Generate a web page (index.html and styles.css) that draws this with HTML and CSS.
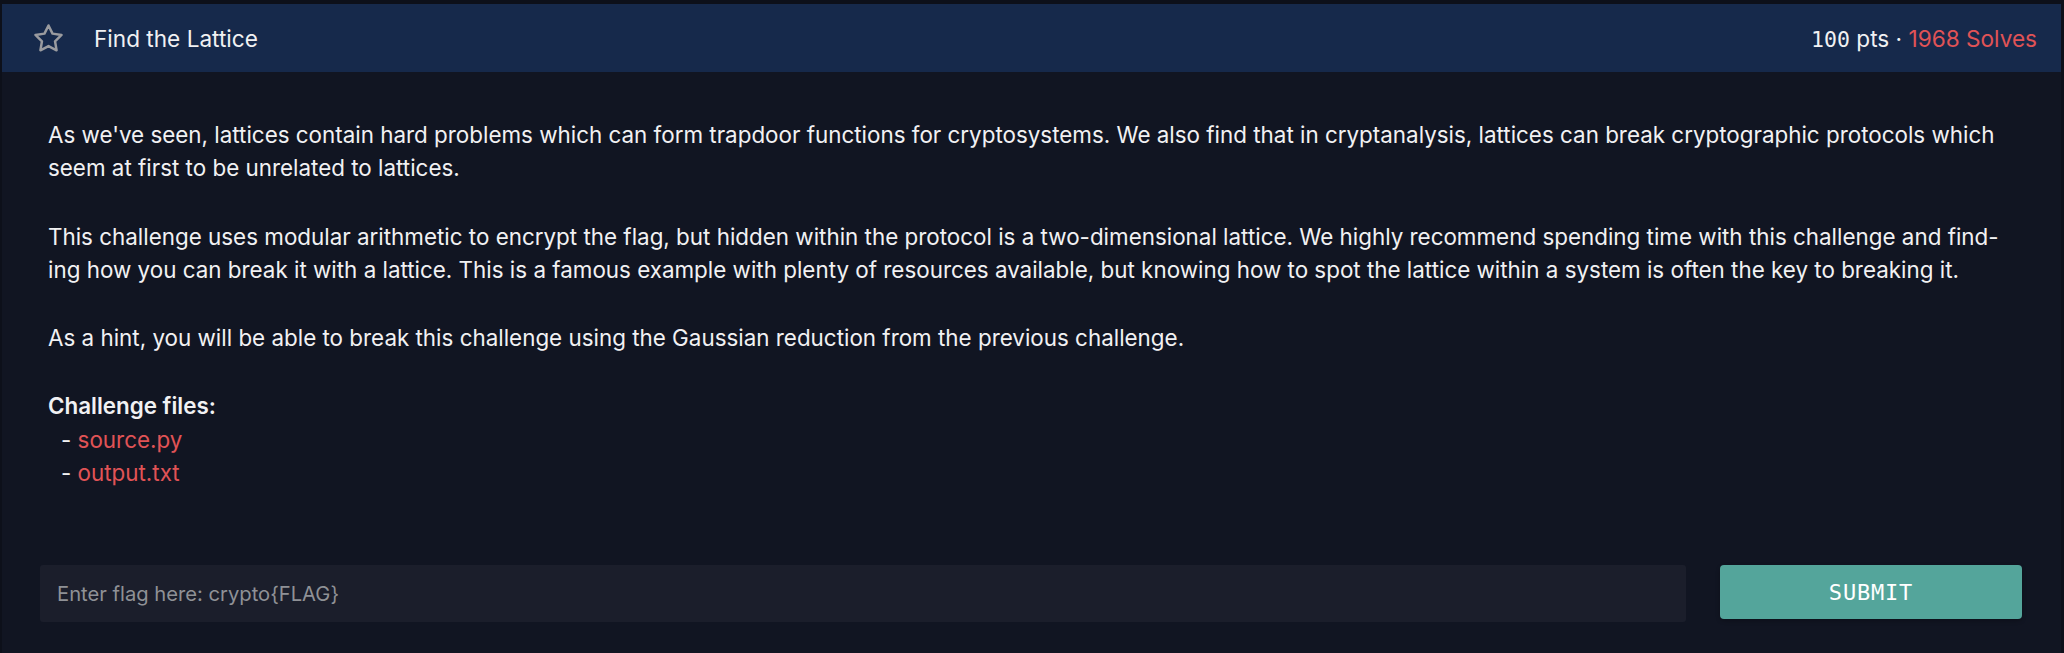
FILE: index.html
```html
<!DOCTYPE html>
<html lang="en">
<head>
<meta charset="utf-8">
<title>Find the Lattice</title>
<link rel="stylesheet" href="styles.css">
</head>
<body>
<div class="card">
  <div class="card-header">
    <svg class="star" viewBox="0 0 24 24" width="33" height="33" aria-hidden="true">
      <polygon points="12 2.5 14.94 8.46 21.5 9.41 16.75 14.04 17.87 20.58 12 17.5 6.13 20.58 7.25 14.04 2.5 9.41 9.06 8.46 12 2.5" fill="none" stroke="#9a9b9f" stroke-width="1.8" stroke-linejoin="round"/>
    </svg>
    <div class="title">Find the Lattice</div>
    <div class="meta"><span class="mono">100</span> pts · <span class="solves">1968 Solves</span></div>
  </div>
  <div class="card-body">
    <p>As we've seen, lattices contain hard problems which can form trapdoor functions for cryptosystems. We also find that in cryptanalysis, lattices can break cryptographic protocols which<br>seem at first to be unrelated to lattices.</p>
    <p>This challenge uses modular arithmetic to encrypt the flag, but hidden within the protocol is a two-dimensional lattice. We highly recommend spending time with this challenge and find-<br>ing how you can break it with a lattice. This is a famous example with plenty of resources available, but knowing how to spot the lattice within a system is often the key to breaking it.</p>
    <p>As a hint, you will be able to break this challenge using the Gaussian reduction from the previous challenge.</p>
    <div class="files">
      <div class="files-title">Challenge files:</div>
      <div class="file">- <a href="#">source.py</a></div>
      <div class="file">- <a href="#">output.txt</a></div>
    </div>
    <form class="flag-form">
      <input class="flag-input" type="text" placeholder="Enter flag here: crypto{FLAG}">
      <button class="submit" type="button">SUBMIT</button>
    </form>
  </div>
</div>
</body>
</html>
```
FILE: styles.css
```css
html, body {
  margin: 0;
  padding: 0;
  background: #0d101a;
}
body {
  font-family: Inter, "Noto Sans", sans-serif;
  color: #f1f1f3;
}
.card {
  margin: 4px 3px 0 2px;
  background: #111522;
  min-height: 649px;
}
.card-header {
  height: 68px;
  display: flex;
  align-items: center;
  padding: 0 24px 0 30px;
  background: #16294b;
  font-size: 22.6px;
}
.star {
  display: block;
  margin-right: 29px;
}
.title {
  flex: 1;
}
.meta {
  white-space: nowrap;
}
.mono {
  font-family: "DejaVu Sans Mono", monospace;
  font-size: 21.5px;
}
.solves {
  color: #e05356;
}
.card-body {
  padding: 46px 16px 0 46px;
  font-size: 22.4px;
  line-height: 33.3px;
}
.card-body p {
  margin: 0 0 35px;
  white-space: nowrap;
}
.files-title {
  font-weight: 600;
}
.file {
  padding-left: 13px;
}
.file a {
  color: #e05356;
  text-decoration: none;
}
.flag-form {
  display: flex;
  align-items: flex-start;
  gap: 34px;
  margin: 76px 23px 0 -8px;
}
.flag-input {
  flex: 1;
  height: 57px;
  box-sizing: border-box;
  border: none;
  border-radius: 3px;
  background: #1b1e2b;
  padding: 0 17px;
  font-family: Inter, "Noto Sans", sans-serif;
  font-size: 20.2px;
  color: #f1f1f3;
  outline: none;
}
.flag-input::placeholder {
  color: #8f9196;
}
.submit {
  width: 302px;
  height: 54px;
  border: none;
  border-radius: 4px;
  background: #54a59b;
  color: #ffffff;
  font-family: "DejaVu Sans Mono", monospace;
  font-size: 22px;
  letter-spacing: 0.8px;
  cursor: pointer;
  box-shadow: 0 2px 4px rgba(0,0,0,0.25);
}
```
